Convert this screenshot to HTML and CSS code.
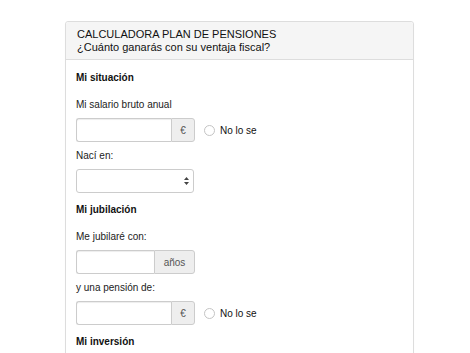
FILE: index.html
```html
<!DOCTYPE html>
<html lang="es">
<head>
<meta charset="utf-8">
<title>Calculadora plan de pensiones</title>
<link rel="stylesheet" href="styles.css">
</head>
<body>
<div class="panel">
  <div class="panel-heading">
    <div class="title">CALCULADORA PLAN DE PENSIONES</div>
    <div class="title">¿Cuánto ganarás con su ventaja fiscal?</div>
  </div>
  <div class="panel-body">
    <div class="section">Mi situación</div>
    <div class="group">
      <div class="label">Mi salario bruto anual</div>
      <div class="row">
        <div class="input-group"><span class="input"></span><span class="addon addon-euro">€</span></div>
        <div class="radio"><span class="circle"></span><span>No lo se</span></div>
      </div>
    </div>
    <div class="group">
      <div class="label">Nací en:</div>
      <div class="select">
        <svg class="arrows" width="5" height="8" viewBox="0 0 5 8"><path d="M2.5 0 L5 3 L0 3 Z M2.5 8 L5 5 L0 5 Z" fill="#444"/></svg>
      </div>
    </div>
    <div class="section section-next">Mi jubilación</div>
    <div class="group">
      <div class="label">Me jubilaré con:</div>
      <div class="row">
        <div class="input-group"><span class="input"></span><span class="addon addon-years">años</span></div>
      </div>
    </div>
    <div class="group">
      <div class="label">y una pensión de:</div>
      <div class="row">
        <div class="input-group"><span class="input"></span><span class="addon addon-euro">€</span></div>
        <div class="radio"><span class="circle"></span><span>No lo se</span></div>
      </div>
    </div>
    <div class="section section-next">Mi inversión</div>
  </div>
</div>
</body>
</html>
```

FILE: styles.css
```css
html, body {
  margin: 0;
  padding: 0;
  background: #fff;
}
body {
  font-family: "Liberation Sans", Arial, Helvetica, sans-serif;
  color: #222;
  padding: 21px 0 0 65px;
  overflow: hidden;
}
.panel {
  width: 347px;
  border: 1px solid #ddd;
  border-radius: 3px;
  box-shadow: 0 1px 1px rgba(0,0,0,0.05);
  min-height: 340px;
}
.panel-heading {
  background: #f5f5f5;
  border-bottom: 1px solid #ddd;
  border-radius: 3px 3px 0 0;
  padding: 6px 11px 5px;
}
.title {
  font-size: 11px;
  line-height: 13px;
  color: #111;
}
.panel-body {
  padding: 11px 10px 0 10px;
}
.section {
  font-size: 10px;
  font-weight: bold;
  line-height: 14px;
  color: #111;
  margin-bottom: 13px;
}
.section-next {
  margin-top: 10px;
}
.group {
  margin-bottom: 7px;
}
.label {
  font-size: 10px;
  line-height: 14px;
  color: #222;
  margin-bottom: 6px;
}
.row {
  display: flex;
  align-items: center;
}
.input-group {
  display: flex;
  width: 119px;
  height: 24px;
  box-sizing: border-box;
}
.input {
  flex: 1;
  border: 1px solid #ccc;
  border-right: none;
  border-radius: 3px 0 0 3px;
  box-shadow: inset 0 1px 1px rgba(0,0,0,0.075);
  background: #fff;
}
.addon {
  display: flex;
  align-items: center;
  justify-content: center;
  background: #eee;
  border: 1px solid #ccc;
  border-radius: 0 3px 3px 0;
  font-size: 10px;
  color: #555;
}
.addon-euro {
  width: 22px;
}
.addon-years {
  width: 39px;
}
.radio {
  display: flex;
  align-items: center;
  margin-left: 9px;
  font-size: 10px;
  color: #111;
}
.circle {
  width: 9px;
  height: 9px;
  border: 1px solid #c4c4c4;
  border-radius: 50%;
  background: #fff;
  margin-right: 5px;
}
.select {
  width: 118px;
  height: 24px;
  box-sizing: border-box;
  border: 1px solid #ccc;
  border-radius: 3px;
  display: flex;
  align-items: center;
  justify-content: flex-end;
  padding-right: 4px;
}
```
